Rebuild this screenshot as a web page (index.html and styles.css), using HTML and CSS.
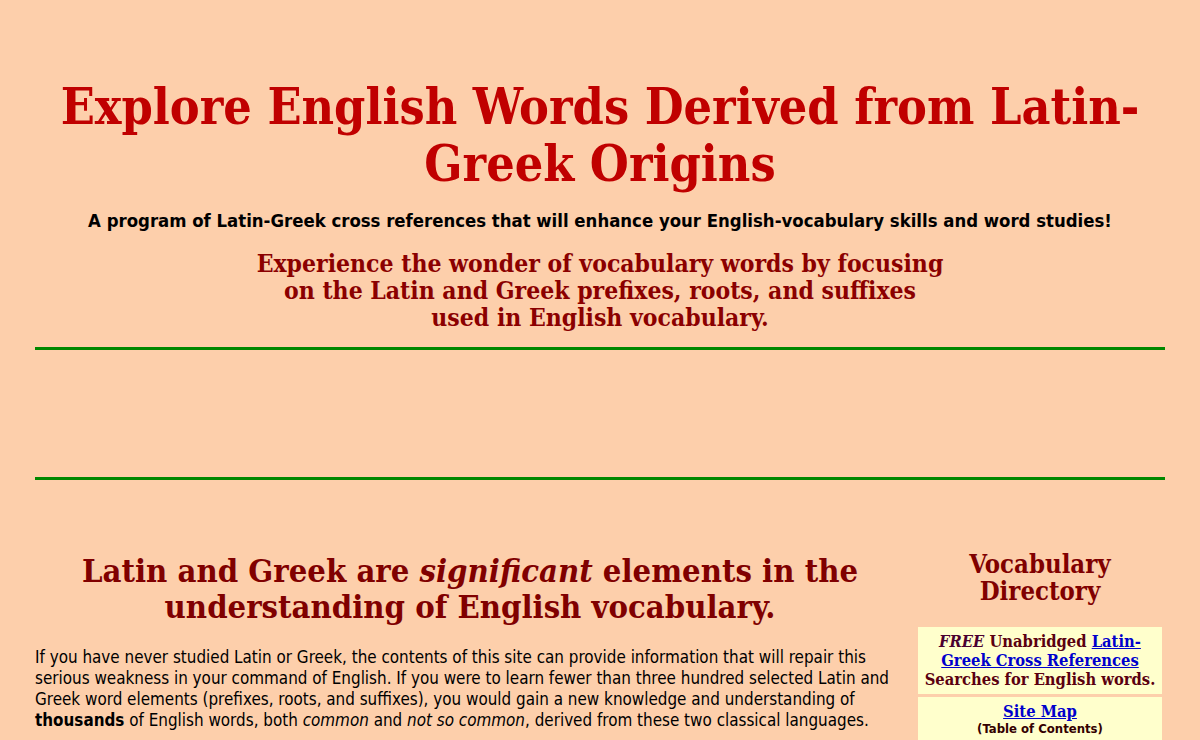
FILE: index.html
```html
<!DOCTYPE html>
<html lang="en">
<head>
<meta charset="utf-8">
<title>Explore English Words Derived from Latin-Greek Origins</title>
<link rel="stylesheet" href="styles.css">
</head>
<body>
<div class="page">
  <header class="masthead">
    <h1 class="title">Explore English Words Derived from Latin-<br>Greek Origins</h1>
    <p class="tagline">A program of Latin-Greek cross references that will enhance your English-vocabulary skills and word studies!</p>
    <p class="lead">Experience the wonder of vocabulary words by focusing<br>on the Latin and Greek prefixes, roots, and suffixes<br>used in English vocabulary.</p>
  </header>
  <hr class="rule">
  <div class="adspace"></div>
  <hr class="rule rule-bottom">
  <div class="content">
    <main class="main">
      <h2 class="heading">Latin and Greek are <em>significant</em> elements in the understanding of English vocabulary.</h2>
      <p class="body-text">If you have never studied Latin or Greek, the contents of this site can provide information that will repair this serious weakness in your command of English. If you were to learn fewer than three hundred selected Latin and Greek word elements (prefixes, roots, and suffixes), you would gain a new knowledge and understanding of <strong>thousands</strong> of English words, both <em>common</em> and <em>not so common</em>, derived from these two classical languages.</p>
    </main>
    <aside class="sidebar">
      <h3 class="side-title">Vocabulary<br>Directory</h3>
      <div class="side-box side-box-first">
        <p class="side-text"><em>FREE</em> Unabridged <a href="#">Latin-<br>Greek Cross References</a><br>Searches for English words.</p>
      </div>
      <div class="side-box">
        <p class="side-link"><a href="#">Site Map</a></p>
        <p class="side-small">(Table of Contents)</p>
      </div>
    </aside>
  </div>
</div>
</body>
</html>
```
FILE: styles.css
```css
html, body {
  margin: 0;
  padding: 0;
  background: #fdcfab;
}
.page {
  padding: 0 35px;
}
.masthead {
  text-align: center;
  padding-top: 78px;
}
.title {
  margin: 0;
  font-family: "DejaVu Serif Condensed", "DejaVu Serif", serif;
  font-weight: bold;
  font-size: 49.8px;
  line-height: 57px;
  color: #c00000;
}
.tagline {
  margin: 18px 0 0;
  font-family: "DejaVu Sans Condensed", "DejaVu Sans", sans-serif;
  font-weight: bold;
  font-size: 18.4px;
  line-height: 22px;
  color: #000;
}
.lead {
  margin: 18px 0 0;
  font-family: "DejaVu Serif Condensed", "DejaVu Serif", serif;
  font-weight: bold;
  font-size: 24.5px;
  line-height: 27px;
  color: #8b0000;
}
.rule {
  margin: 16px 0 0;
  border: 0;
  height: 3px;
  background: #008800;
}
.adspace {
  height: 127px;
}
.rule-bottom {
  margin-top: 0;
}
.content {
  display: flex;
  gap: 13px;
  margin-top: 73px;
}
.main {
  width: 870px;
}
.heading {
  margin: 0;
  text-align: center;
  font-family: "DejaVu Serif Condensed", "DejaVu Serif", serif;
  font-weight: bold;
  font-size: 32.5px;
  line-height: 36px;
  color: #800000;
}
.body-text {
  margin: 22px 0 0;
  font-family: "DejaVu Sans Condensed", "DejaVu Sans", sans-serif;
  font-size: 16.9px;
  line-height: 21px;
  color: #000;
}
.sidebar {
  width: 244px;
}
.side-title {
  margin: -2px 0 0;
  text-align: center;
  font-family: "DejaVu Serif Condensed", "DejaVu Serif", serif;
  font-weight: bold;
  font-size: 25.5px;
  line-height: 27px;
  color: #800000;
}
.side-box {
  background: #ffffcc;
  text-align: center;
  padding: 5px 2px;
  margin-bottom: 3px;
}
.side-box-first {
  margin-top: 22px;
}
.side-text {
  margin: 0;
  font-family: "DejaVu Serif Condensed", "DejaVu Serif", serif;
  font-weight: bold;
  font-size: 16.4px;
  line-height: 19px;
  color: #5a0010;
}
.side-text em {
  color: #4a0030;
}
a {
  color: #0000cc;
}
.side-link {
  margin: 0;
  font-family: "DejaVu Serif Condensed", "DejaVu Serif", serif;
  font-weight: bold;
  font-size: 16.4px;
  line-height: 19px;
}
.side-small {
  margin: 0;
  font-family: "DejaVu Sans Condensed", "DejaVu Sans", sans-serif;
  font-weight: bold;
  font-size: 13px;
  line-height: 16px;
  color: #330000;
}
```
